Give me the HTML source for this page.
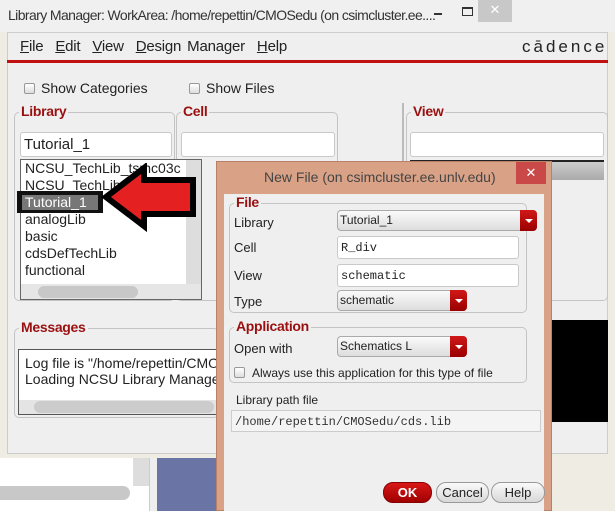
<!DOCTYPE html><html><head><style>
*{box-sizing:border-box;margin:0;padding:0}
body{width:615px;height:511px;overflow:hidden;background:#efece4;font-family:"Liberation Sans",sans-serif;position:relative;color:#222}
.a{position:absolute}
.t{font-size:14px;white-space:nowrap}
.g{position:absolute;border:1px solid #c4c4c4;border-radius:5px}
.gl{position:absolute;top:-10px;left:4px;background:#efefef;padding:0 2px;color:#9a1010;font-weight:bold;font-size:14px;letter-spacing:-0.3px}
.f{position:absolute;background:#fff;border:1px solid #c9c9c9;border-radius:3px}
.cb{position:absolute;width:11px;height:11px;border:1px solid #999;background:linear-gradient(#fff,#ddd);border-radius:2px}
.dd{position:absolute;border:1px solid #aaa;border-radius:4px;background:linear-gradient(#fafafa,#ddd);font-size:12px;padding:2px 0 0 2px}
.dd b{position:absolute;right:-1px;top:-1px;bottom:-1px;width:17px;background:linear-gradient(#d01818,#9a0000);border-radius:0 4px 4px 0}
.dd b:after{content:"";position:absolute;left:5px;top:9px;border:4px solid transparent;border-top:4px solid #fff;border-bottom:0}
.mono{font-family:"Liberation Mono",monospace;font-size:12px}
.bt{position:absolute;height:21px;border:1px solid #999;border-radius:10px;background:linear-gradient(#fafafa,#d8d8d8);font-size:13px;text-align:center;line-height:19px}
</style></head><body>
<div class="a" style="left:0;top:0;width:615px;height:32px;background:#f0f0f0"></div>
<div class="a t" style="left:8px;top:7px;font-size:14px;letter-spacing:-0.6px;color:#333">Library Manager: WorkArea: /home/repettin/CMOSedu (on csimcluster.ee....</div>
<div class="a" style="left:434px;top:13px;width:8px;height:2px;background:#333"></div>
<div class="a" style="left:462px;top:7px;width:11px;height:9px;border:1px solid #333;border-top-width:2px"></div>
<div class="a" style="left:478px;top:0;width:34px;height:22px;background:#c8c8c8;color:#fff;text-align:center;font-size:13px;line-height:20px">✕</div>
<div class="a" style="left:7px;top:32px;width:601px;height:422px;background:#efefef;border:1px solid #ccc"></div>
<div class="a t" style="left:20px;top:38px;font-size:15px;letter-spacing:-0.2px;word-spacing:2px;color:#222"><u>F</u>ile&nbsp;&nbsp;<u>E</u>dit&nbsp;&nbsp;<u>V</u>iew&nbsp;&nbsp;<u>D</u>esign Manager&nbsp;&nbsp;<u>H</u>elp</div>
<div class="a t" style="left:522px;top:37px;font-size:17px;letter-spacing:3px;color:#222">cādence</div>
<div class="a" style="left:7px;top:60px;width:601px;height:3px;background:#c01010"></div>
<div class="cb" style="left:24px;top:83px"></div><div class="a t" style="left:41px;top:80px">Show Categories</div>
<div class="cb" style="left:189px;top:83px"></div><div class="a t" style="left:206px;top:80px">Show Files</div>
<div class="g" style="left:14px;top:112px;width:161px;height:189px"><span class="gl">Library</span></div>
<div class="g" style="left:176px;top:112px;width:162px;height:189px"><span class="gl">Cell</span></div>
<div class="a" style="left:402px;top:103px;width:2px;height:200px;background:#bbb"></div>
<div class="g" style="left:406px;top:112px;width:202px;height:189px"><span class="gl">View</span></div>
<div class="f" style="left:20px;top:132px;width:152px;height:25px"></div>
<div class="a t" style="left:24px;top:136px;font-size:15px">Tutorial_1</div>
<div class="f" style="left:181px;top:132px;width:154px;height:25px"></div>
<div class="f" style="left:410px;top:132px;width:194px;height:25px"></div>
<div class="a" style="left:410px;top:160px;width:194px;height:20px;background:linear-gradient(#ccc,#aaa);border-top:2px solid #222"></div>
<div class="a" style="left:20px;top:159px;width:182px;height:141px;background:#fff;border:1px solid #666;overflow:hidden">
<div class="a t" style="left:4px;top:0;font-size:14px;line-height:17px">NCSU_TechLib_tsmc03c<br>NCSU_TechLib_tsmc04<br><br>analogLib<br>basic<br>cdsDefTechLib<br>functional</div>
<div class="a" style="right:0;top:0;width:15px;height:139px;background:#ddd"></div>
<div class="a" style="left:0;bottom:0;width:180px;height:15px;background:#e6e6e6"></div>
<div class="a" style="left:17px;bottom:1px;width:100px;height:12px;background:#c8c8c8;border-radius:6px"></div>
</div>
<div class="a" style="left:17px;top:191px;width:86px;height:22px;background:#111"></div>
<div class="a t" style="left:22px;top:195px;width:76px;height:15px;background:#777;color:#fff;font-size:14px;line-height:15px;padding-left:3px">Tutorial_1</div>
<svg class="a" style="left:100px;top:163px" width="100" height="70"><polygon points="6,34 44,5 44,17 93,17 93,51 44,51 44,63" fill="#e52020" stroke="#000" stroke-width="6" stroke-linejoin="miter"/></svg>
<div class="g" style="left:14px;top:328px;width:205px;height:90px"><span class="gl">Messages</span></div>
<div class="a" style="left:18px;top:349px;width:200px;height:66px;background:#fff;border:1px solid #555"></div>
<div class="a t" style="left:25px;top:355px;font-size:14px;line-height:16px">Log file is "/home/repettin/CMOSedu<br>Loading NCSU Library Manager</div>
<div class="a" style="left:19px;top:400px;width:198px;height:14px;background:#e4e4e4"></div>
<div class="a" style="left:34px;top:401px;width:180px;height:12px;background:#ccc;border-radius:6px"></div>
<div class="a" style="left:551px;top:320px;width:57px;height:102px;background:#000"></div>
<div class="a" style="left:0;top:458px;width:150px;height:53px;background:#fff;border-right:1px solid #ccc"></div>
<div class="a" style="left:133px;top:458px;width:16px;height:28px;background:#ddd"></div>
<div class="a" style="left:0;top:486px;width:130px;height:14px;background:#c8c8c8;border-radius:0 7px 7px 0"></div>
<div class="a" style="left:150px;top:458px;width:7px;height:53px;background:#eee"></div>
<div class="a" style="left:157px;top:458px;width:60px;height:53px;background:#6a75a5"></div>
<div class="a" style="left:216px;top:161px;width:336px;height:350px;background:#d9a287;border:1px solid #b88066"></div>
<div class="a t" style="left:264px;top:169px;font-size:14px;color:#444">New File (on csimcluster.ee.unlv.edu)</div>
<div class="a" style="left:516px;top:162px;width:30px;height:22px;background:#c94848;color:#fff;text-align:center;font-size:13px;line-height:22px">✕</div>
<div class="a" style="left:224px;top:194px;width:320px;height:317px;background:#efefef"></div>
<div class="g" style="left:229px;top:203px;width:298px;height:110px"><span class="gl">File</span></div>
<div class="a t" style="left:234px;top:215px;font-size:13px">Library</div>
<div class="a t" style="left:234px;top:240px;font-size:13px">Cell</div>
<div class="a t" style="left:234px;top:268px;font-size:13px">View</div>
<div class="a t" style="left:234px;top:294px;font-size:13px">Type</div>
<div class="dd" style="left:337px;top:210px;width:200px;height:21px">Tutorial_1<b></b></div>
<div class="f mono" style="left:337px;top:236px;width:182px;height:23px;padding:4px 3px">R_div</div>
<div class="f mono" style="left:337px;top:264px;width:182px;height:23px;padding:4px 3px">schematic</div>
<div class="dd" style="left:337px;top:290px;width:130px;height:21px">schematic<b></b></div>
<div class="g" style="left:229px;top:327px;width:298px;height:56px"><span class="gl">Application</span></div>
<div class="a t" style="left:234px;top:341px;font-size:13px">Open with</div>
<div class="dd" style="left:337px;top:336px;width:130px;height:21px">Schematics L<b></b></div>
<div class="cb" style="left:234px;top:367px"></div>
<div class="a t" style="left:252px;top:366px;font-size:12px">Always use this application for this type of file</div>
<div class="a t" style="left:236px;top:393px;font-size:12px">Library path file</div>
<div class="a mono" style="left:231px;top:410px;width:310px;height:22px;background:#f4f4f4;border:1px solid #ccc;padding:4px 3px;color:#333">/home/repettin/CMOSedu/cds.lib</div>
<div class="bt" style="left:383px;top:482px;width:49px;background:linear-gradient(#d81818,#a00000);color:#fff;font-weight:bold;border-color:#800">OK</div>
<div class="bt" style="left:436px;top:482px;width:53px">Cancel</div>
<div class="bt" style="left:491px;top:482px;width:54px">Help</div>
</body></html>
